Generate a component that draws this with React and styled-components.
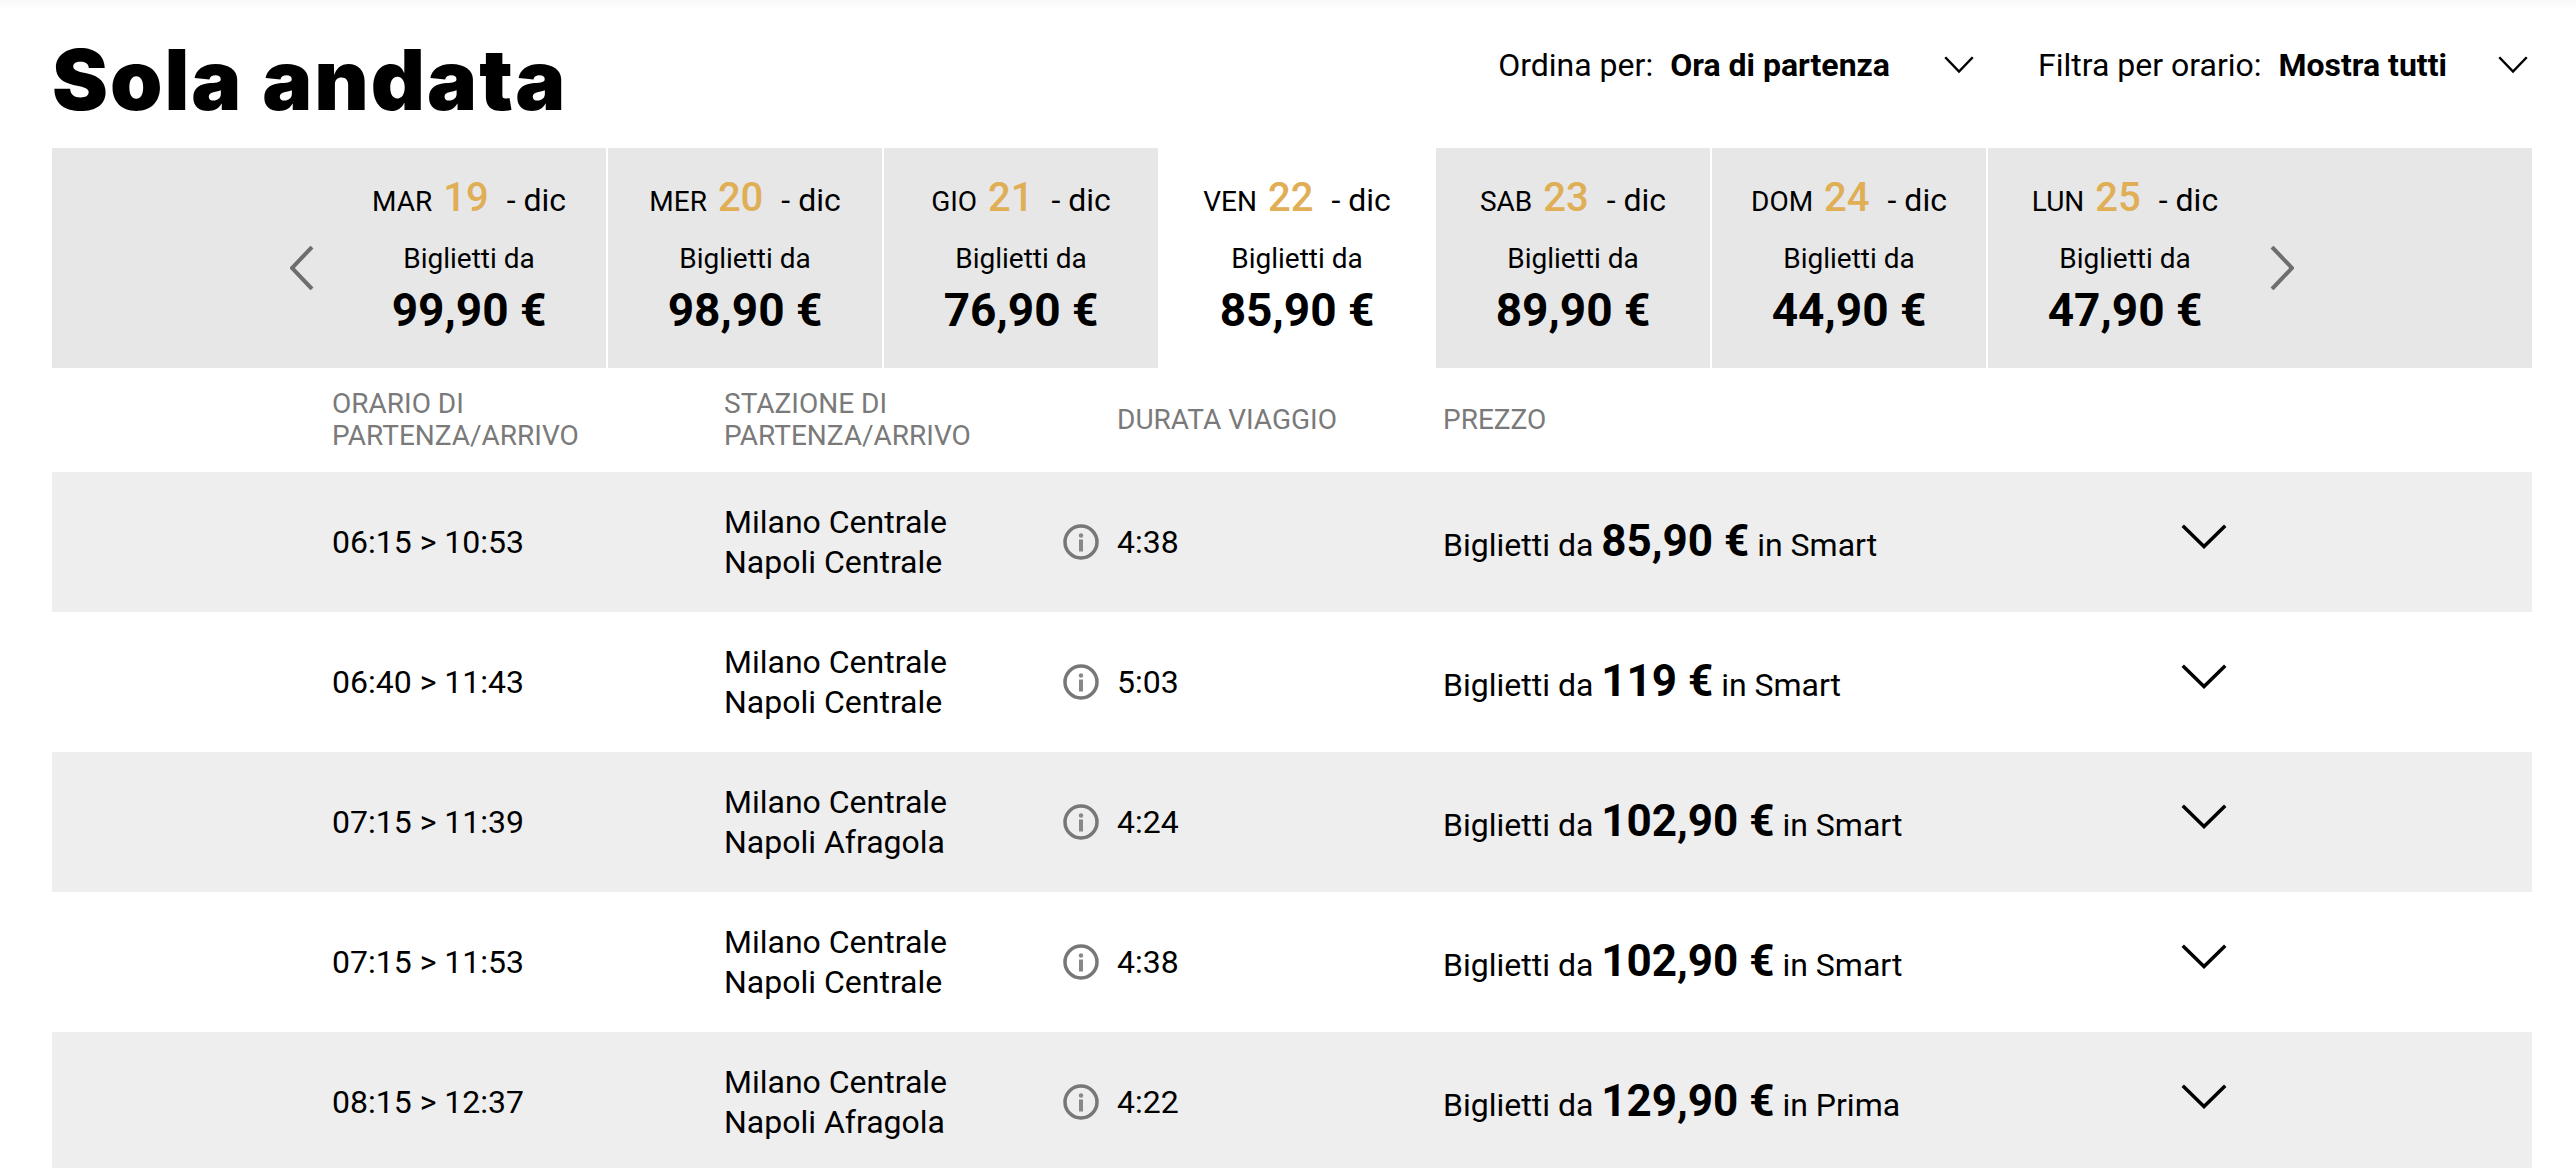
import React from "react";
import styled, { createGlobalStyle } from "styled-components";

const GlobalStyle = createGlobalStyle`
    html, body {
        margin: 0;
        padding: 0;
        background: #fff;
    }
    body {
        font-family: Roboto, "Liberation Sans", sans-serif;
        color: #000;
    }
`;

const Page = styled.div`
    width: 2576px;
    height: 1168px;
    overflow: hidden;
    background: linear-gradient(to bottom, #f9f9f9 0, #fff 10px);
    padding: 0 44px 0 52px;
    box-sizing: border-box;
`;

const Header = styled.header`
    height: 148px;
    display: flex;
    justify-content: space-between;
`;

const Title = styled.h1`
    margin: 0;
    padding-top: 30px;
    font-family: Inter, sans-serif;
    font-size: 84px;
    font-weight: 900;
    line-height: 100px;
    letter-spacing: 2px;
`;

const Controls = styled.div`
    display: flex;
    padding-top: 46px;
    height: 38px;
    margin-right: 4px;
`;

const Control = styled.div`
    display: flex;
    align-items: center;
    font-size: 32px;
    line-height: 38px;
    margin-left: 64px;

    b {
        font-weight: 700;
        margin-left: 17px;
    }

    svg {
        margin-left: ${(p) => p.$gap}px;
    }
`;

const DayBar = styled.div`
    height: 220px;
    display: flex;
    background: #e7e7e7;
`;

const Arrow = styled.div`
    width: ${(p) => p.$width}px;
    display: flex;
    align-items: center;
    justify-content: ${(p) => (p.$right ? "flex-start" : "flex-end")};
    padding: 20px ${(p) => (p.$right ? 0 : 18)}px 0 ${(p) => (p.$right ? 6 : 0)}px;
    box-sizing: border-box;
`;

const Day = styled.div`
    width: 276px;
    box-sizing: border-box;
    display: flex;
    flex-direction: column;
    align-items: center;
    padding-top: 26px;
    background: ${(p) => (p.$active ? "#fff" : "transparent")};
    border-right: 2px solid ${(p) => (p.$plain ? "transparent" : "#fff")};
`;

const DayDate = styled.div`
    font-size: 28px;
    line-height: 48px;
    white-space: nowrap;

    strong {
        font-size: 40px;
        font-weight: 500;
        color: #dfae55;
        margin: 0 18px 0 4px;
    }

    em {
        font-style: normal;
        font-size: 32px;
    }
`;

const DayLabel = styled.div`
    font-size: 28px;
    line-height: 38px;
    margin-top: 14px;
`;

const DayPrice = styled.div`
    font-size: 46px;
    font-weight: 700;
    line-height: 54px;
    margin-top: 5px;
`;

const TableHead = styled.div`
    height: 104px;
    display: grid;
    grid-template-columns: 392px 393px 326px 1fr;
    align-items: center;
    padding-left: 280px;
    font-size: 28px;
    line-height: 32px;
    color: #7a7a7a;
`;

const Row = styled.div`
    height: 140px;
    display: grid;
    grid-template-columns: 392px 339px 54px 326px 738px 1fr;
    align-items: center;
    padding-left: 280px;
    font-size: 32px;
    background: ${(p) => (p.$shaded ? "#eee" : "#fff")};
`;

const Stations = styled.div`
    line-height: 40px;
`;

const Fare = styled.div`
    white-space: nowrap;
    padding-bottom: 3px;

    strong {
        font-size: 44px;
        font-weight: 700;
    }
`;

const Toggle = styled.div`
    display: flex;
    padding-bottom: 10px;
`;

const Chevron = ({ w, h, stroke, color = "#000" }) => (
    <svg width={w} height={h} viewBox={`0 0 ${w} ${h}`} fill="none">
        <path
            d={`M${stroke / 2} ${stroke / 2} L${w / 2} ${h - stroke} L${w - stroke / 2} ${stroke / 2}`}
            stroke={color}
            strokeWidth={stroke}
        />
    </svg>
);

const SideArrow = ({ right }) => (
    <svg width="24" height="44" viewBox="0 0 24 44" fill="none">
        <path
            d={right ? "M2 1 L22 22 L2 43" : "M22 1 L2 22 L22 43"}
            stroke="#6e6e6e"
            strokeWidth="4"
        />
    </svg>
);

const InfoIcon = () => (
    <svg width="36" height="36" viewBox="0 0 36 36" fill="none">
        <circle cx="18" cy="18" r="16" stroke="#777" strokeWidth="3.5" />
        <path d="M18 15.5 V27.5" stroke="#888" strokeWidth="4" />
        <circle cx="18" cy="11.5" r="2.2" fill="#888" />
    </svg>
);

const days = [
    ["MAR", "19", "99,90 €"],
    ["MER", "20", "98,90 €"],
    ["GIO", "21", "76,90 €"],
    ["VEN", "22", "85,90 €", true],
    ["SAB", "23", "89,90 €"],
    ["DOM", "24", "44,90 €"],
    ["LUN", "25", "47,90 €"],
];

const trips = [
    ["06:15 > 10:53", "Napoli Centrale", "4:38", "85,90 €", "Smart"],
    ["06:40 > 11:43", "Napoli Centrale", "5:03", "119 €", "Smart"],
    ["07:15 > 11:39", "Napoli Afragola", "4:24", "102,90 €", "Smart"],
    ["07:15 > 11:53", "Napoli Centrale", "4:38", "102,90 €", "Smart"],
    ["08:15 > 12:37", "Napoli Afragola", "4:22", "129,90 €", "Prima"],
];

export default function App() {
    return (
        <Page>
            <GlobalStyle />
            <Header>
                <Title>Sola andata</Title>
                <Controls>
                    <Control $gap={54}>
                        Ordina per: <b>Ora di partenza</b>
                        <Chevron w={30} h={18} stroke={2.5} />
                    </Control>
                    <Control $gap={51}>
                        Filtra per orario: <b>Mostra tutti</b>
                        <Chevron w={30} h={18} stroke={2.5} />
                    </Control>
                </Controls>
            </Header>
            <DayBar>
                <Arrow $width={280}>
                    <SideArrow />
                </Arrow>
                {days.map(([name, num, price, active], i) => (
                    <Day key={num} $active={active} $plain={active || i === days.length - 1}>
                        <DayDate>
                            {name} <strong>{num}</strong>
                            <em>- dic</em>
                        </DayDate>
                        <DayLabel>Biglietti da</DayLabel>
                        <DayPrice>{price}</DayPrice>
                    </Day>
                ))}
                <Arrow $width={268} $right>
                    <SideArrow right />
                </Arrow>
            </DayBar>
            <TableHead>
                <div>
                    ORARIO DI
                    <br />
                    PARTENZA/ARRIVO
                </div>
                <div>
                    STAZIONE DI
                    <br />
                    PARTENZA/ARRIVO
                </div>
                <div>DURATA VIAGGIO</div>
                <div>PREZZO</div>
            </TableHead>
            {trips.map(([time, to, length, price, cls], i) => (
                <Row key={time} $shaded={i % 2 === 0}>
                    <div>{time}</div>
                    <Stations>
                        Milano Centrale
                        <br />
                        {to}
                    </Stations>
                    <InfoIcon />
                    <div>{length}</div>
                    <Fare>
                        Biglietti da <strong>{price}</strong> in {cls}
                    </Fare>
                    <Toggle>
                        <Chevron w={46} h={26} stroke={3.5} />
                    </Toggle>
                </Row>
            ))}
        </Page>
    );
}
